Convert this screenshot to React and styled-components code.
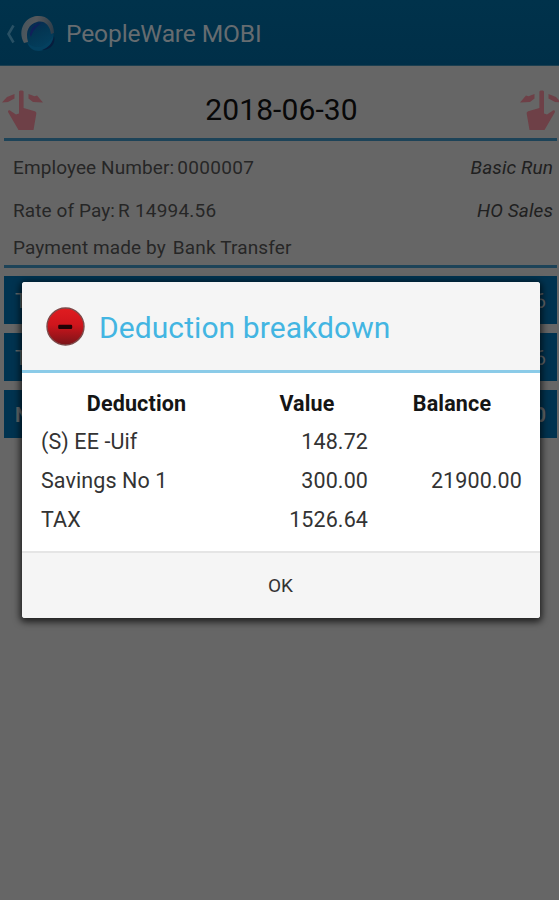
import React from "react";
import styled, { createGlobalStyle } from "styled-components";

const GlobalStyle = createGlobalStyle`
  * { box-sizing: border-box; }
  body { margin: 0; background: #666; font-family: Roboto, "Liberation Sans", sans-serif; }
`;

const Screen = styled.main`
  position: relative;
  width: 559px;
  height: 900px;
  overflow: hidden;
  background: #666;
`;
const Header = styled.header`
  display: flex;
  align-items: center;
  height: 66px;
  padding: 2px 0 0 6px;
  background: linear-gradient(#00324b, #002f48);
  border-bottom: 1px solid #1c3f50;
`;
const AppTitle = styled.h1`
  margin: 0 0 0 8px;
  font-size: 24.6px;
  font-weight: 400;
  letter-spacing: -0.15px;
  color: #666c70;
`;
const DateBar = styled.section`
  display: flex;
  align-items: center;
  justify-content: space-between;
  height: 72px;
  margin-right: -3px;
  padding: 15px 0 0 1px;
`;
const DateText = styled.h2`
  margin: 0;
  font-size: 30px;
  font-weight: 400;
  line-height: 36px;
  letter-spacing: 0.1px;
  color: #080808;
`;
const Rule = styled.div`
  height: 3px;
  margin: 0 2px 0 4px;
  background: #1d4358;
`;
const Info = styled.section`
  height: 124px;
  padding: 15px 6px 0 13px;
`;
const InfoRow = styled.div`
  display: flex;
  justify-content: space-between;
  height: ${(p) => p.$height}px;
  font-size: 19px;
  line-height: 24px;
  letter-spacing: 0.1px;
  color: #262626;
`;
const InfoValue = styled.span`
  margin-left: ${(p) => p.$gap}px;
  letter-spacing: ${(p) => p.$tracking || 0.2}px;
`;
const RunText = styled.em`
  color: #202020;
`;
const Totals = styled.section`
  display: flex;
  flex-direction: column;
  gap: 9px;
  padding: 8px 2px 0 4px;
`;
const TotalRow = styled.div`
  display: flex;
  align-items: center;
  justify-content: space-between;
  height: 48px;
  padding: 2px 11px 0;
  background: #003350;
  color: #62686c;
  font-size: 20px;
  font-weight: ${(p) => (p.$strong ? 700 : 400)};
`;
const Dialog = styled.section`
  position: absolute;
  left: 22px;
  top: 282px;
  width: 518px;
  height: 336px;
  overflow: hidden;
  border-radius: 3px;
  background: #fff;
  box-shadow: 0 2px 7px 2px rgba(0, 0, 0, 0.7);
`;
const DialogHeader = styled.header`
  display: flex;
  align-items: center;
  gap: 13px;
  height: 91px;
  padding-left: 24px;
  background: #f5f5f5;
  border-bottom: 3px solid #8bcbe8;
`;
const DialogTitle = styled.h2`
  margin: 2px 0 0;
  font-size: 30px;
  font-weight: 400;
  letter-spacing: 0.08px;
  color: #43b5e2;
`;
const Table = styled.div`
  display: grid;
  grid-template-columns: 191px 136px 154px;
  grid-auto-rows: 38.6px;
  align-items: center;
  height: 178px;
  padding: 11px 18px 0 19px;
`;
const HeadCell = styled.strong`
  padding-left: ${(p) => p.$shift || 0}px;
  text-align: center;
  font-size: 21.5px;
  letter-spacing: 0.15px;
  color: #151515;
`;
const Cell = styled.span`
  font-size: 21.5px;
  letter-spacing: 0.1px;
  text-align: ${(p) => (p.$number ? "right" : "left")};
  color: #333;
`;
const OkButton = styled.button`
  display: block;
  width: 100%;
  height: 67px;
  padding: 0 1px 0 0;
  border: 0;
  border-top: 2px solid #e5e5e5;
  background: #f5f5f5;
  font: 400 19px Roboto, sans-serif;
  color: #333;
`;

const BackIcon = () => (
  <svg width="10" height="22" viewBox="0 0 10 22">
    <path d="M7.5 2.5 2.5 11l5 8.5" fill="none" stroke="#285064" strokeWidth="2.6" />
  </svg>
);
const LogoIcon = () => (
  <svg width="42" height="42" viewBox="0 0 42 42">
    <defs>
      <linearGradient id="ring" x1="0" y1=".3" x2="1" y2=".5">
        <stop offset="0" stopColor="#46545d" />
        <stop offset=".4" stopColor="#56595c" />
        <stop offset="1" stopColor="#2c3c49" />
      </linearGradient>
      <linearGradient id="glass" x1=".2" y1="0" x2=".7" y2="1">
        <stop offset="0" stopColor="#082650" />
        <stop offset=".45" stopColor="#033653" />
        <stop offset="1" stopColor="#04405f" />
      </linearGradient>
    </defs>
    <ellipse cx="23.5" cy="22" rx="14" ry="15" fill="url(#glass)" />
    <path d="M8 30C1 17 9 4 21 3c9-1 17 5 17 17l-3 1C34 12 28 7 21 9c-8 2-12 9-9 20Z" fill="url(#ring)" />
    <path d="M14 22c0-6 5-11 11-12-5 4-8 7-10 14Z" fill="#10205a" />
    <path d="M11 29c7 8 18 7 26-6 0 9-6 14-14 15-6 0-10-3-12-9Z" fill="#04405f" />
    <path d="M26 37c6-2 11-7 12-14 2 7-3 14-12 14Z" fill="#071d3d" />
  </svg>
);
const SwipeIcon = ({ flip }) => (
  <svg width="42" height="42" viewBox="0 0 42 42">
    <g transform={flip ? "translate(42 0) scale(-1 1)" : undefined} fill="#6e4047">
      <path d="M18 2.5c0-1.5 4.6-1.5 4.6 0V19l11.2 3.2c1.3.5 1.7 1.3 1.5 2.5L32.5 41H17.5L7.3 23.5c-.8-1.8.3-2.7 1.7-2.1l6 4.1 3-1Z" />
      <path d="m1 13.5 5-5.5 7.5-3v4.5L7 13Z" />
      <path d="m42 13.5-6-7-2.5.7L27.5 5v4.5l4.5 3.4Z" />
    </g>
  </svg>
);
const MinusIcon = () => (
  <svg width="40" height="40" viewBox="0 0 40 40">
    <defs>
      <linearGradient id="red" x1="0" y1="0" x2="0" y2="1">
        <stop offset="0" stopColor="#e01c20" />
        <stop offset=".45" stopColor="#cf151c" />
        <stop offset="1" stopColor="#791419" />
      </linearGradient>
    </defs>
    <circle cx="19.5" cy="20.5" r="18.5" fill="url(#red)" stroke="#7d4a4a" strokeWidth="1.4" />
    <rect x="12.2" y="18.7" width="14" height="4.2" rx="1.2" fill="#210306" />
  </svg>
);

const totals = [
  { id: "earnings", label: "T", value: "6" },
  { id: "deductions", label: "T", value: "6" },
  { id: "net", label: "N", value: "0", strong: true },
];
const deductions = [
  ["(S) EE -Uif", "148.72", ""],
  ["Savings No 1", "300.00", "21900.00"],
  ["TAX", "1526.64", ""],
];

export default function App() {
  return (
    <Screen>
      <GlobalStyle />
      <Header>
        <BackIcon />
        <LogoIcon />
        <AppTitle>PeopleWare MOBI</AppTitle>
      </Header>
      <DateBar>
        <SwipeIcon />
        <DateText>2018-06-30</DateText>
        <SwipeIcon flip />
      </DateBar>
      <Rule />
      <Info>
        <InfoRow $height={43}>
          <span>Employee Number:<InfoValue $gap={3} $tracking={0.3}>0000007</InfoValue></span>
          <RunText>Basic Run</RunText>
        </InfoRow>
        <InfoRow $height={37}>
          <span>Rate of Pay:<InfoValue $gap={3}>R 14994.56</InfoValue></span>
          <RunText>HO Sales</RunText>
        </InfoRow>
        <InfoRow $height={24}>
          <span>Payment made by<InfoValue $gap={7} $tracking={0.15}>Bank Transfer</InfoValue></span>
        </InfoRow>
      </Info>
      <Rule />
      <Totals>
        {totals.map((t) => (
          <TotalRow key={t.id} $strong={t.strong}>
            <span>{t.label}</span>
            <span>{t.value}</span>
          </TotalRow>
        ))}
      </Totals>
      <Dialog role="dialog">
        <DialogHeader>
          <MinusIcon />
          <DialogTitle>Deduction breakdown</DialogTitle>
        </DialogHeader>
        <Table>
          <HeadCell>Deduction</HeadCell>
          <HeadCell $shift={14}>Value</HeadCell>
          <HeadCell $shift={14}>Balance</HeadCell>
          {deductions.map(([name, value, balance]) => (
            <React.Fragment key={name}>
              <Cell>{name}</Cell>
              <Cell $number>{value}</Cell>
              <Cell $number>{balance}</Cell>
            </React.Fragment>
          ))}
        </Table>
        <OkButton>OK</OkButton>
      </Dialog>
    </Screen>
  );
}
